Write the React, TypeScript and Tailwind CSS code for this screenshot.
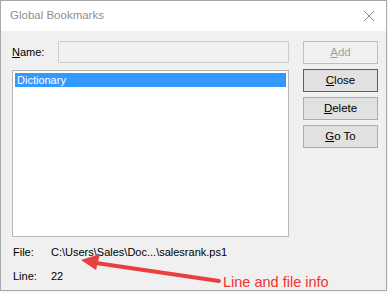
import React from 'react'

const font = { fontFamily: '"Liberation Sans", Arial, sans-serif' }

function Btn({ u, rest, disabled, focused }: { u: string; rest: string; disabled?: boolean; focused?: boolean }) {
  return (
    <div
      className={`h-[23px] w-[75px] flex items-center justify-center text-[11.5px] border ${
        focused ? 'border-[#0078d7] bg-[#e1e1e1]' : disabled ? 'border-[#bfbfbf] bg-[#f0f0f0] text-[#a0a0a0]' : 'border-[#adadad] bg-[#e1e1e1] text-black'
      }`}
    >
      <span>
        <span className="underline">{u}</span>
        {rest}
      </span>
    </div>
  )
}

export default function App() {
  return (
    <div className="relative w-[388px] h-[293px] bg-[#f7f7f7]" style={font}>
      <div className="w-[387px] h-[291px] border border-[#a8a8a8] flex flex-col">
        <div className="h-[30px] bg-white flex items-center justify-between pl-[9px] pr-[11px]">
          <span className="text-[11.5px] text-[#8f8f8f]">Global Bookmarks</span>
          <svg width="12" height="12" viewBox="0 0 12 12">
            <path d="M1 1 L11 11 M11 1 L1 11" stroke="#8a8a8a" strokeWidth="1" />
          </svg>
        </div>
        <div className="flex-1 bg-[#f0f0f0] flex pl-[11px] pr-[8px] pt-[10px]">
          <div className="w-[277px] flex flex-col">
            <div className="flex items-center h-[22px]">
              <span className="w-[46px] text-[11px] text-black">
                <span className="underline">N</span>ame:
              </span>
              <div className="w-[231px] h-[22px] border border-[#cccccc] bg-[#f0f0f0]" />
            </div>
            <div className="mt-[7px] h-[167px] border border-[#b7b7b7] bg-white p-[2px]">
              <div className="h-[14px] bg-[#3399ff] text-white text-[11px] leading-[14px] pl-[2px]">Dictionary</div>
            </div>
            <div className="mt-[8px] flex text-[11px] text-black h-[14px] items-center">
              <span className="w-[39px] pl-[1px]">File:</span>
              <span>C:\Users\Sales\Doc...\salesrank.ps1</span>
            </div>
            <div className="mt-[10px] flex text-[11px] text-black h-[14px] items-center">
              <span className="w-[39px] pl-[1px]">Line:</span>
              <span>22</span>
            </div>
          </div>
          <div className="ml-[14px] flex flex-col gap-[5px]">
            <Btn u="A" rest="dd" disabled />
            <Btn u="C" rest="lose" focused />
            <Btn u="D" rest="elete" />
            <Btn u="G" rest="o To" />
          </div>
        </div>
      </div>
      <svg className="absolute left-0 top-0" width="388" height="293" viewBox="0 0 388 293">
        <line x1="96" y1="263" x2="219" y2="281" stroke="#e8403f" strokeWidth="4" strokeLinecap="round" />
        <polygon points="81,260 100,254 96,270" fill="#e8403f" />
      </svg>
      <span className="absolute left-[223px] top-[274px] text-[14.5px] leading-[17px] text-[#f0332f]">Line and file info</span>
    </div>
  )
}
